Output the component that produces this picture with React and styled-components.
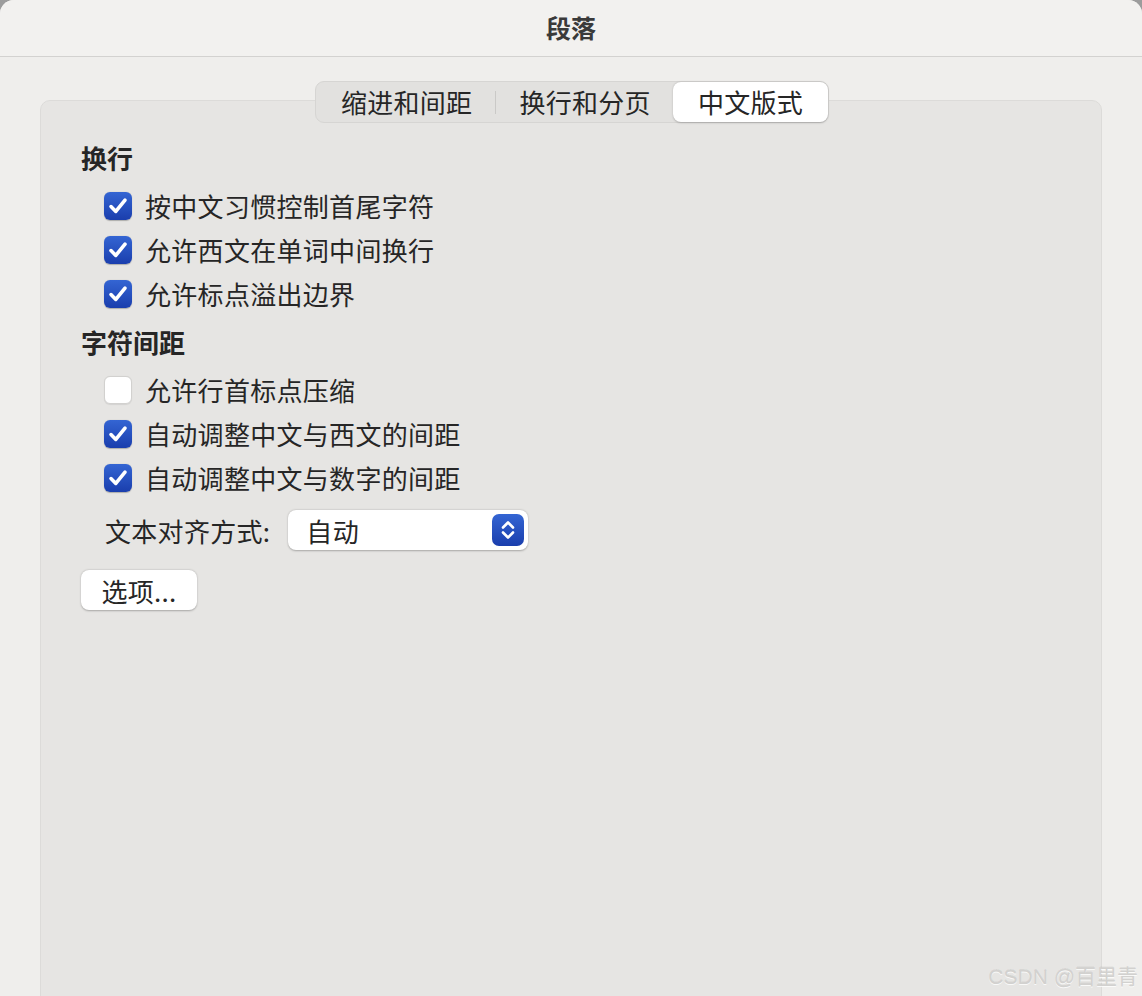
import React from "react";
import styled, { createGlobalStyle } from "styled-components";

const Global = createGlobalStyle`
  html, body { margin: 0; padding: 0; background: #9c9c9c; }
  body { width: 1142px; height: 996px; overflow: hidden; }
  * { box-sizing: border-box; }
`;

const FONT = `"Noto Sans CJK SC", "Noto Sans", "Liberation Sans", sans-serif`;

const Window = styled.div`
  position: relative;
  width: 1142px;
  height: 996px;
  background: #efeeec;
  border-radius: 14px 14px 0 0;
  overflow: hidden;
  font-family: ${FONT};
  color: #262626;
  display: flex;
  flex-direction: column;
`;

const TitleBar = styled.div`
  height: 57px;
  flex: none;
  background: #f2f1ef;
  border-bottom: 1px solid #d3d2d0;
  display: flex;
  align-items: center;
  justify-content: center;
  font-size: 25px;
  font-weight: 700;
  color: #3a3a3a;
  padding-bottom: 2px;
`;

const TabBarWrap = styled.div`
  position: relative;
  z-index: 1;
  display: flex;
  justify-content: center;
  margin-top: 24px;
  padding-left: 2px;
`;

const TabBar = styled.div`
  display: inline-flex;
  align-items: center;
  border: 1px solid #d6d5d3;
  background: #e2e1df;
  border-radius: 9px;
`;

const Tab = styled.div`
  height: 40px;
  padding: 0 25px;
  font-size: 26px;
  line-height: 40px;
  letter-spacing: 0.3px;
  border-radius: 8px;
  color: #262626;
  background: ${(p) => (p.$active ? "#ffffff" : "transparent")};
  box-shadow: ${(p) => (p.$active ? "0 0.5px 2px rgba(0,0,0,0.22)" : "none")};
`;

const TabSep = styled.div`
  width: 1px;
  height: 23px;
  margin: 0 -2px;
  background: ${(p) => (p.$hidden ? "transparent" : "#cac9c7")};
`;

const Panel = styled.div`
  margin: -23px 40px 0;
  min-height: 960px;
  background: #e6e5e3;
  border: 1px solid #dcdbd9;
  border-radius: 10px;
  padding: 35px 40px 0;
  display: flex;
  flex-direction: column;
  align-items: flex-start;
`;

const SectionTitle = styled.div`
  height: 44px;
  line-height: 44px;
  font-size: 26px;
  font-weight: 700;
  color: #262626;
  margin: ${(p) => (p.$first ? "0 0 4px" : "4px 0 4px")};
`;

const CheckRow = styled.div`
  height: 44px;
  display: flex;
  align-items: center;
  gap: 13px;
  padding-left: 23px;
  font-size: 26px;
  line-height: 44px;
  letter-spacing: 0.3px;
  color: #262626;
`;

const Box = styled.div`
  width: 28px;
  height: 28px;
  border-radius: 6px;
  flex: none;
  display: flex;
  align-items: center;
  justify-content: center;
  background: ${(p) =>
    p.$checked ? "linear-gradient(180deg, #3465d3 0%, #1a3ead 100%)" : "#ffffff"};
  border: ${(p) => (p.$checked ? "none" : "1px solid #d2d1cf")};
  box-shadow: ${(p) =>
    p.$checked ? "0 0.5px 1px rgba(0,0,0,0.25)" : "0 0.5px 1px rgba(0,0,0,0.08)"};
`;

const SelectRow = styled.div`
  margin-top: 10px;
  height: 40px;
  display: flex;
  align-items: center;
  gap: 18px;
  padding-left: 24px;
  font-size: 26px;
  letter-spacing: 0.3px;
  color: #262626;
`;

const Popup = styled.div`
  width: 240px;
  height: 40px;
  background: #ffffff;
  border-radius: 8px;
  box-shadow: 0 0.5px 2px rgba(0,0,0,0.28);
  display: flex;
  align-items: center;
  justify-content: space-between;
  padding: 0 4px 0 18px;
  font-size: 26px;
`;

const Stepper = styled.div`
  width: 32px;
  height: 32px;
  border-radius: 7px;
  background: linear-gradient(180deg, #3465d3 0%, #1a3ead 100%);
  display: flex;
  align-items: center;
  justify-content: center;
`;

const Button = styled.div`
  margin-top: 20px;
  width: 116px;
  height: 40px;
  background: #ffffff;
  border-radius: 8px;
  box-shadow: 0 0.5px 2px rgba(0,0,0,0.28);
  display: flex;
  align-items: center;
  justify-content: center;
  font-size: 26px;
  letter-spacing: 0.3px;
  color: #262626;
`;

const Watermark = styled.div`
  position: absolute;
  right: 4px;
  bottom: 6px;
  font-family: "Liberation Sans", "Noto Sans CJK SC", sans-serif;
  font-size: 21px;
  color: #d2d1cf;
  text-shadow: 0 1px 0 rgba(255,255,255,0.8), 0 -1px 0 rgba(0,0,0,0.06);
`;

const Check = () => (
  <svg width="22" height="22" viewBox="0 0 22 22">
    <path
      d="M4 11.6 L8.8 16.4 L18 5.2"
      fill="none"
      stroke="#fff"
      strokeWidth="3.6"
      strokeLinecap="round"
      strokeLinejoin="round"
    />
  </svg>
);

const Chevrons = () => (
  <svg width="32" height="32" viewBox="0 0 32 32">
    <path d="M11 13.5 L16 8.5 L21 13.5" fill="none" stroke="#fff" strokeWidth="2.6" strokeLinecap="round" strokeLinejoin="round" />
    <path d="M11 18.5 L16 23.5 L21 18.5" fill="none" stroke="#fff" strokeWidth="2.6" strokeLinecap="round" strokeLinejoin="round" />
  </svg>
);

const Option = ({ checked, children }) => (
  <CheckRow>
    <Box $checked={checked}>{checked && <Check />}</Box>
    <span>{children}</span>
  </CheckRow>
);

export default function App() {
  return (
    <>
      <Global />
      <Window>
        <TitleBar>段落</TitleBar>
        <TabBarWrap>
          <TabBar>
            <Tab>缩进和间距</Tab>
            <TabSep />
            <Tab>换行和分页</Tab>
            <TabSep $hidden />
            <Tab $active>中文版式</Tab>
          </TabBar>
        </TabBarWrap>
        <Panel>
          <SectionTitle $first>换行</SectionTitle>
          <Option checked>按中文习惯控制首尾字符</Option>
          <Option checked>允许西文在单词中间换行</Option>
          <Option checked>允许标点溢出边界</Option>
          <SectionTitle>字符间距</SectionTitle>
          <Option>允许行首标点压缩</Option>
          <Option checked>自动调整中文与西文的间距</Option>
          <Option checked>自动调整中文与数字的间距</Option>
          <SelectRow>
            <span>文本对齐方式:</span>
            <Popup>
              <span>自动</span>
              <Stepper>
                <Chevrons />
              </Stepper>
            </Popup>
          </SelectRow>
          <Button>选项...</Button>
        </Panel>
        <Watermark>CSDN @百里青</Watermark>
      </Window>
    </>
  );
}
